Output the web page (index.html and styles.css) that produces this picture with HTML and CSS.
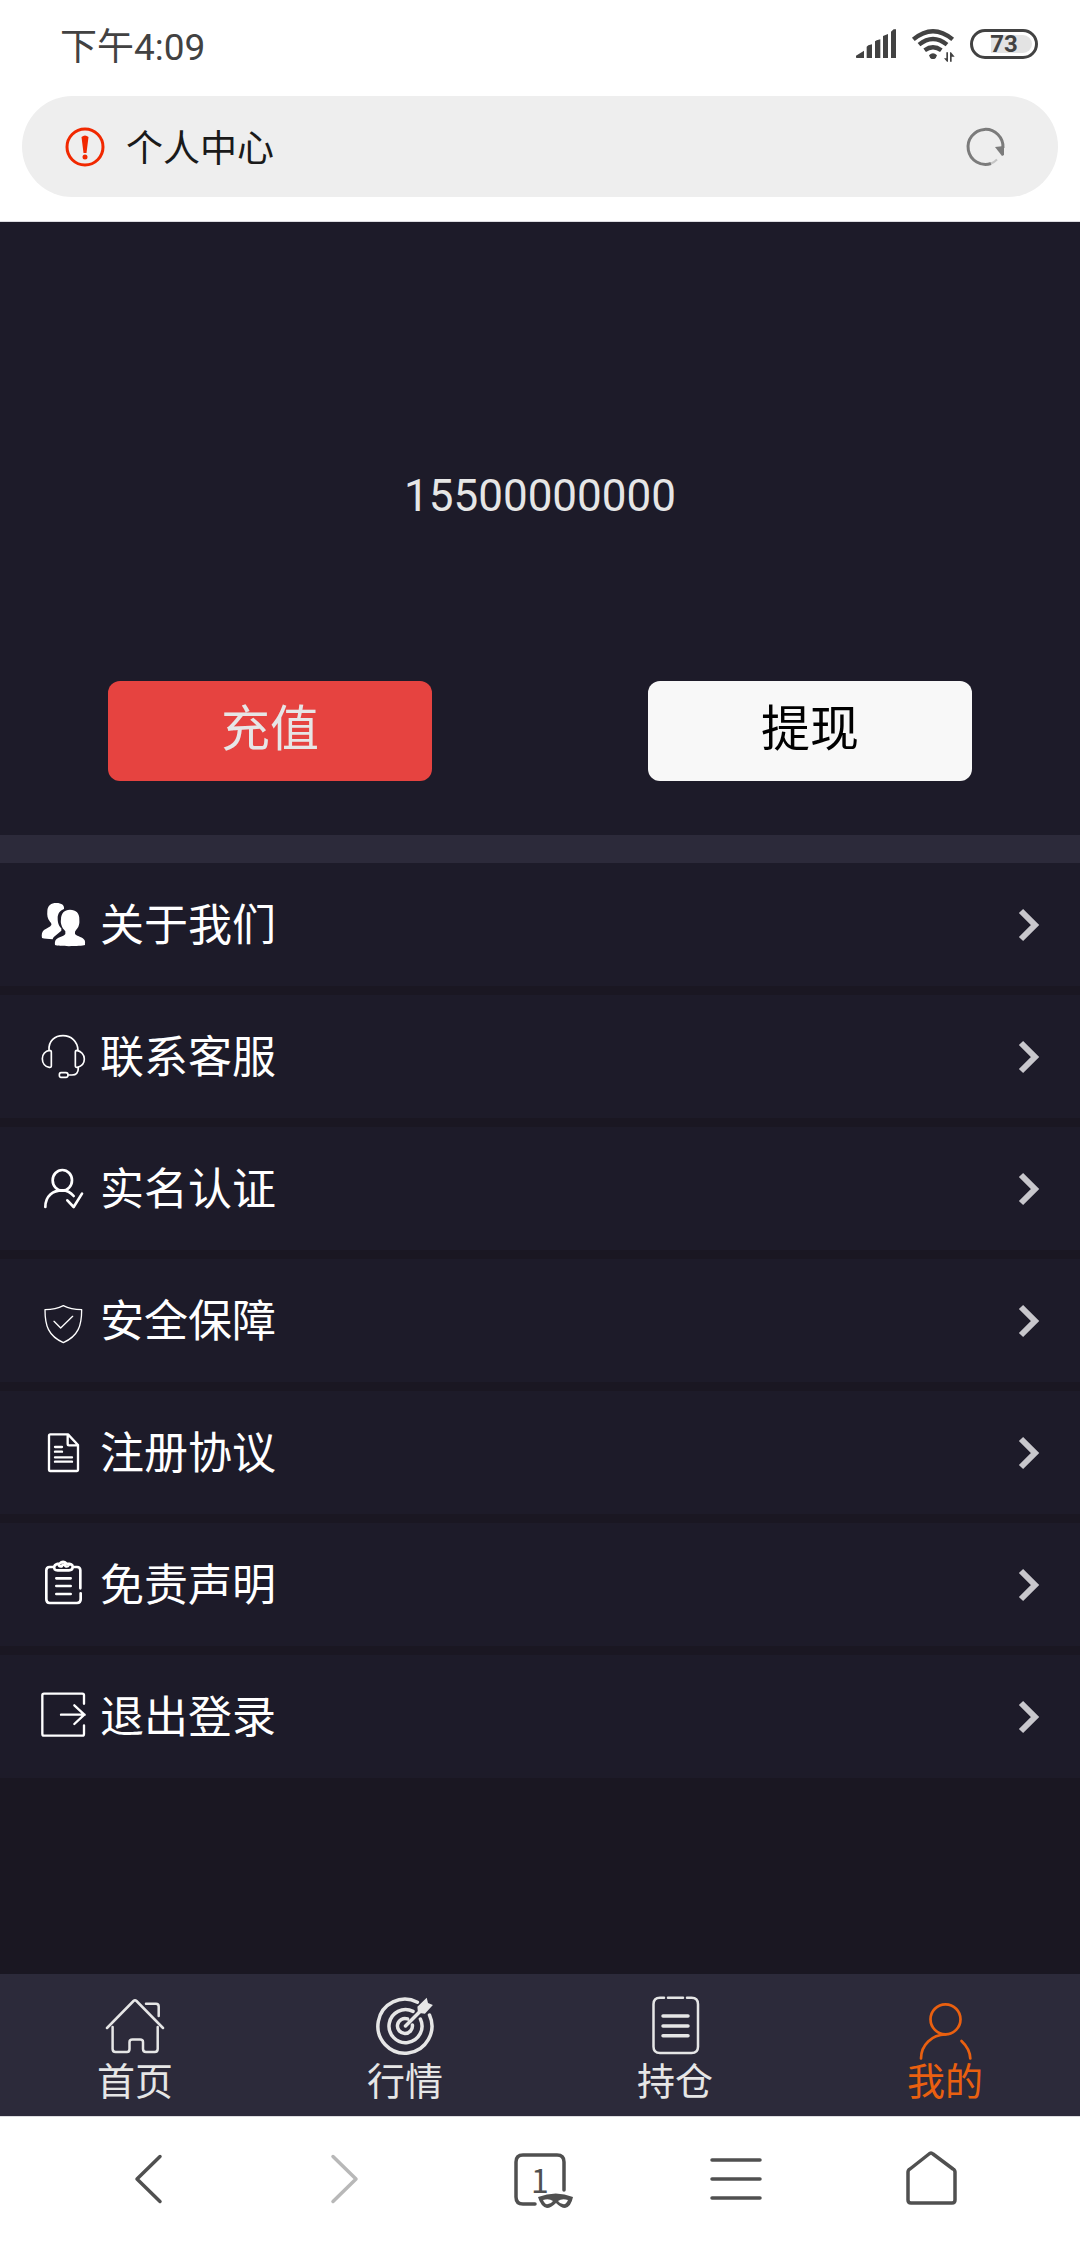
FILE: index.html
```html
<!DOCTYPE html>
<html lang="zh-CN">
<head>
<meta charset="utf-8">
<meta name="viewport" content="width=device-width, initial-scale=1">
<title>个人中心</title>
<link rel="stylesheet" href="styles.css">
</head>
<body>
<header class="browser-top">
  <div class="status">
    <span class="clock">下午4:09</span>
    <div class="status-icons">
      <svg class="signal" viewBox="168 90 120 90" aria-hidden="true"><path d="M168 176v-6l24-15v22h-20zM200 177v-34l5-4 11-3v41zM225 177v-50l5-3 11-3v56zM249 177v-66l15-6v72zM273 177V98l8-7h7v86z"/></svg>
      <svg class="wifi" viewBox="336 90 126 99" aria-hidden="true">
        <g fill="none" stroke="#424242" stroke-width="13"><path d="M340 121Q399 72 458 121M357 137Q399 103 441 137M374 154Q399 136 424 154"/></g>
        <path d="M387 169q12-12 24 0-2 8-8 11h-8q-6-3-8-11zM439 160h5v28h-3l-9-10h7zM450 188v-28h3l11 13h-9v15z"/>
      </svg>
      <span class="battery"><span class="battery-level">73</span></span>
    </div>
  </div>
  <div class="address">
    <svg class="alert" viewBox="0 0 40 40" aria-hidden="true"><circle cx="20" cy="20" r="18" fill="none" stroke="#f12800" stroke-width="3"/><path d="M16.500 10q3.500-3 7 0l-2 16h-3z"/><circle cx="20" cy="30" r="2.500"/></svg>
    <span class="address-title">个人中心</span>
    <button class="icon-button" type="button" aria-label="刷新">
      <svg class="reload" viewBox="0 0 40 40" aria-hidden="true"><path d="M37 21A17.500 17.500 0 1 0 25 36.500" fill="none" stroke="#7b7b7b" stroke-width="3"/><path d="M25 36.500q3-1 6-4" fill="none" stroke="#c4c4c4" stroke-width="2"/><path d="M29 20l9-1v9l-2 1z" fill="#7b7b7b"/></svg>
    </button>
  </div>
</header>

<main class="page">
  <section class="account">
    <p class="phone">15500000000</p>
    <div class="actions">
      <button class="action action-primary" type="button">充值</button>
      <button class="action" type="button">提现</button>
    </div>
  </section>

  <nav class="menu">
    <a class="row" href="#about">
      <svg class="row-icon" viewBox="0 0 132 132" aria-hidden="true"><path class="solid" d="M46 0c16 0 25 7 23 18-13 5-19 15-19 27 0 16 4 24 11 31v7l-18 15c-4 3-7 6-8 11-14-1-25-2-32-4-2-9 0-20 6-24 9-5 18-9 22-15 1-4-1-7-4-10-8-9-9-19-8-32C20 8 30 0 46 0zM87 20c18 0 29 11 28 29 0 6 1 11-1 16-2 10-8 13-12 21v7c8 8 24 9 29 19 2 5 1 9 1 14-11 4-79 5-90 0-1-7 0-13 4-17 8-8 20-7 27-16v-8c-5-7-10-10-12-20-2-5-2-10-1-16 0-18 10-29 27-29z"/></svg>
      <span class="row-label">关于我们</span><svg class="chevron" viewBox="0 0 20 32" aria-hidden="true"><path d="M2 2l14 14L2 30"/></svg>
    </a>
    <a class="row" href="#service">
      <svg class="row-icon" viewBox="0 0 132 132" aria-hidden="true"><path d="M24 46C22 17 42 2 66 2s44 17 45 44M26 46q5 0 5 6v40q0 6-6 5C12 95 4 84 4 71s9-23 22-25zM107 46q-4 0-4 6v40q0 6 6 5c12-3 21-12 21-25s-10-24-23-26zM112 98c0 16-7 22-19 22H81M60 113h15q6 0 6 7t-6 7H60q-5 0-5-7t5-7z" stroke-width="5"/></svg>
      <span class="row-label">联系客服</span><svg class="chevron" viewBox="0 0 20 32" aria-hidden="true"><path d="M2 2l14 14L2 30"/></svg>
    </a>
    <a class="row" href="#verify">
      <svg class="row-icon" viewBox="0 0 132 132" aria-hidden="true"><ellipse cx="64" cy="40" rx="29" ry="31" stroke-width="8"/><path d="M13 120C13 86 36 70 64 70q20 0 34 17M79 100l19 20 25-40" stroke-width="8"/></svg>
      <span class="row-label">实名认证</span><svg class="chevron" viewBox="0 0 20 32" aria-hidden="true"><path d="M2 2l14 14L2 30"/></svg>
    </a>
    <a class="row" href="#security">
      <svg class="row-icon" viewBox="0 0 132 132" aria-hidden="true"><path d="M67 20C50 29 34 32 12 32c0 48 10 79 55 99 45-20 55-51 55-99-22 0-38-3-55-12zM39 67l20 20 36-35" stroke-width="4"/></svg>
      <span class="row-label">安全保障</span><svg class="chevron" viewBox="0 0 20 32" aria-hidden="true"><path d="M2 2l14 14L2 30"/></svg>
    </a>
    <a class="row" href="#agreement">
      <svg class="row-icon" viewBox="0 0 132 132" aria-hidden="true"><path d="M28 10h53l30 32v75q0 3-3 3H27q-3 0-3-3V14q0-4 4-4zM80 11v28q0 4 4 4h26" stroke-width="7"/><path d="M42 48h21M42 62h21M42 79h51M42 92h51" stroke-width="7"/></svg>
      <span class="row-label">注册协议</span><svg class="chevron" viewBox="0 0 20 32" aria-hidden="true"><path d="M2 2l14 14L2 30"/></svg>
    </a>
    <a class="row" href="#disclaimer">
      <svg class="row-icon" viewBox="0 0 132 132" aria-hidden="true"><path d="M39 12H26q-10 0-10 10v87q0 11 10 11h82q11 0 11-11V91M118 76V22q0-10-10-10H96M50 22q-13 0-10-12 3-8 16-8Q66-9 77 2q19 0 18 10 0 10-11 10zM53 4q1 7 9 6 5-10 12 0 6 2 10-5M46 46h43M46 69h43M46 93h43" stroke-width="8"/></svg>
      <span class="row-label">免责声明</span><svg class="chevron" viewBox="0 0 20 32" aria-hidden="true"><path d="M2 2l14 14L2 30"/></svg>
    </a>
    <a class="row" href="#logout">
      <svg class="row-icon" viewBox="0 0 132 132" aria-hidden="true"><path d="M129 26V1q0-5-5-5H9q-5 0-5 5v115q0 6 5 6h115q5 0 5-6V91M60 59h71M100 31l30 28-30 28" stroke-width="7"/></svg>
      <span class="row-label">退出登录</span><svg class="chevron" viewBox="0 0 20 32" aria-hidden="true"><path d="M2 2l14 14L2 30"/></svg>
    </a>
  </nav>
</main>

<nav class="tabs">
  <a class="tab" href="#home">
    <svg class="tab-icon" viewBox="0 0 60 60" aria-hidden="true"><path d="M2 31L28.500 4q1.500-1.500 3 0L58 31M7.600 30v22q0 3 3 3h11.400q2.500 0 2.500-3v-7q0-2.500 3-2.500h7.500q3 0 3 2.500v7q0 3 3 3h8.700q3 0 3-3V30M41 6.700h10q2.700 0 2.700 2.800V19" stroke-width="2.500"/></svg>
    <span>首页</span>
  </a>
  <a class="tab" href="#market">
    <svg class="tab-icon" viewBox="0 0 60 60" aria-hidden="true"><path d="M42.400 5.200A27 27 0 1 0 54.500 18M38 14.400A16.500 16.500 0 1 0 45.400 22M32.500 21.900A7.500 7.500 0 1 0 37.400 28M30.500 29L47 12.500" stroke-width="3.500"/><path class="solid" d="M42.400 9.700L51.700.7 53 6l4.900 2-8 8.700-7-1z"/></svg>
    <span>行情</span>
  </a>
  <a class="tab" href="#positions">
    <svg class="tab-icon" viewBox="0 0 60 60" aria-hidden="true"><path d="M19 .8h-4q-6.500 0-6.500 6.500v42.500q0 6.200 6.500 6.200h31.500q6.500 0 6.500-6.200V7.300Q53 .8 46.500.8H42M23 .8h15" stroke-width="2.500"/><path d="M18 19h25M18 29h25M18 38.700h25" stroke-width="3.500"/></svg>
    <span>持仓</span>
  </a>
  <a class="tab tab-active" href="#mine" aria-current="page">
    <svg class="tab-icon" viewBox="0 0 60 60" aria-hidden="true"><circle cx="30.500" cy="22.300" r="15" stroke-width="2.700"/><path d="M6 61.500C6 48 17 37.500 30.500 37.500M46.500 44Q55 52 55.300 61.500" stroke-width="2.700"/></svg>
    <span>我的</span>
  </a>
</nav>

<footer class="toolbar">
  <button class="tool" type="button" aria-label="后退"><svg viewBox="0 0 52 56" aria-hidden="true"><path d="M37 5.500L14 28l23 22.500"/></svg></button>
  <button class="tool tool-disabled" type="button" aria-label="前进" disabled><svg viewBox="0 0 52 56" aria-hidden="true"><path d="M15 5.500L38 28 15 50.500"/></svg></button>
  <button class="tool" type="button" aria-label="标签页"><svg viewBox="0 0 52 56" aria-hidden="true"><path d="M21 53H9q-7 0-7-7V11q0-7 7-7h34q7 0 7 7v28"/><path class="mask" fill-rule="evenodd" d="M24 46q18-7 35 0-2 10-8 11-4 0-9-5-5 5-9 5-6-1-9-11zM29 49q2 5 5 4 3 0 5-3-4-3-10-1zM54 49q-2 5-5 4-3 0-5-3 4-3 10-1z"/></svg><span class="tab-count">1</span></button>
  <button class="tool" type="button" aria-label="菜单"><svg viewBox="0 0 52 56" aria-hidden="true"><path d="M2 9h48M2 28h48M2 47h48"/></svg></button>
  <button class="tool" type="button" aria-label="主页"><svg viewBox="0 0 52 56" aria-hidden="true"><path d="M26 2q1 0 2 1l20 15q2 1 2 3v28q0 3-3 3H6q-3 0-3-3V21q0-2 2-3L24 3q1-1 2-1z"/></svg></button>
</footer>
</body>
</html>
```
FILE: styles.css
```css
* {
  box-sizing: border-box;
}

body {
  margin: 0;
  min-height: 100vh;
  display: flex;
  flex-direction: column;
  background: #1a1722;
  font-family: Roboto, "Noto Sans CJK SC", sans-serif;
}

a {
  color: inherit;
  text-decoration: none;
}

button {
  margin: 0;
  padding: 0;
  border: 0;
  background: none;
  font-family: inherit;
}

svg {
  display: block;
  overflow: visible;
  flex: none;
}

/* Browser header */

.browser-top {
  padding-bottom: 25px;
  background: #fff;
  border-bottom: 1px solid #dcdce0;
}

.status {
  height: 96px;
  padding: 0 42px 6px 60px;
  display: flex;
  align-items: center;
  justify-content: space-between;
  color: #424242;
}

.clock {
  padding-bottom: 2px;
  font-size: 37px;
}

.status-icons {
  display: flex;
  align-items: flex-start;
  gap: 16px;
  fill: #424242;
}

.signal {
  width: 40px;
  height: 30px;
}

.wifi {
  width: 42px;
  height: 33px;
}

.battery {
  width: 68px;
  height: 30px;
  padding: 3px;
  border: 3px solid #424242;
  border-radius: 15px;
}

.battery-level {
  display: flex;
  align-items: center;
  justify-content: center;
  height: 18px;
  border-radius: 9px;
  background: linear-gradient(to right, transparent 27%, #e3e3e3 27%);
  font-size: 24px;
  font-weight: 700;
}

.address {
  height: 101px;
  margin: 0 22px;
  padding: 0 52px 0 43px;
  display: flex;
  align-items: center;
  gap: 21px;
  border-radius: 51px;
  background: #eee;
}

.browser-top .address {
  margin-bottom: -1px;
}

.alert {
  width: 40px;
  height: 40px;
  fill: #f12800;
}

.address-title {
  flex: 1;
  padding-bottom: 2px;
  font-size: 37px;
  color: #1a1a1a;
}

.reload {
  width: 40px;
  height: 40px;
}

/* Account summary */

.page {
  flex: 1;
}

.account {
  padding: 243px 0 54px;
  border-bottom: 28px solid #2c2a3a;
  background: #1d1b29;
}

.phone {
  margin: 0 0 154px;
  font-size: 44px;
  line-height: 62px;
  text-align: center;
  color: #e6e6e6;
}

.actions {
  display: grid;
  grid-template-columns: 1fr 1fr;
  justify-items: center;
}

.action {
  width: 60%;
  height: 100px;
  padding-bottom: 14px;
  border-radius: 12px;
  background: #f8f8f8;
  color: #000;
  font-size: 49px;
}

.action-primary {
  background: #e64340;
  color: #e6e6e6;
}

/* Menu */

.menu {
  display: grid;
  gap: 9px;
}

.row {
  height: 123px;
  padding: 0 41px;
  display: flex;
  align-items: center;
  gap: 15px;
  background: #1d1b29;
  color: #fff;
}

.row-icon {
  width: 44px;
  height: 44px;
  fill: none;
  stroke: #fff;
  stroke-linecap: round;
  stroke-linejoin: round;
}

.solid {
  fill: #fff;
  stroke: none;
}

.row-label {
  flex: 1;
  padding-bottom: 5px;
  font-size: 44px;
}

.chevron {
  width: 20px;
  height: 32px;
  fill: none;
  stroke: #c8c7cc;
  stroke-width: 6;
}

/* Tab bar */

.tabs {
  height: 142px;
  padding-top: 23px;
  display: grid;
  grid-template-columns: repeat(4, 1fr);
  background: #2c2a3a;
}

.tab {
  display: flex;
  flex-direction: column;
  align-items: center;
  gap: 3px;
  font-size: 38px;
  line-height: 44px;
  color: #e6e6e6;
}

.tab-active {
  color: #ea6010;
}

.tab-icon {
  width: 60px;
  height: 60px;
  fill: none;
  stroke: currentColor;
  stroke-linecap: round;
}

.tab-icon .solid {
  fill: currentColor;
}

/* Browser toolbar */

.toolbar {
  height: 128px;
  padding: 0 51px 3px;
  display: grid;
  grid-template-columns: repeat(5, 1fr);
  border-top: 1px solid #dcdce0;
  background: #fff;
}

.tool {
  position: relative;
  display: flex;
  align-items: center;
  justify-content: center;
  color: #505050;
}

.tool-disabled {
  color: #b8b8b8;
}

.tool svg {
  width: 52px;
  height: 56px;
  fill: none;
  stroke: currentColor;
  stroke-width: 3.5;
  stroke-linecap: round;
  stroke-linejoin: round;
}

.tool .mask {
  fill: currentColor;
  stroke: none;
}

.tab-count {
  position: absolute;
  inset: 0;
  display: flex;
  align-items: center;
  justify-content: center;
  font-family: "Noto Sans CJK SC", sans-serif;
  font-size: 32px;
}
```
